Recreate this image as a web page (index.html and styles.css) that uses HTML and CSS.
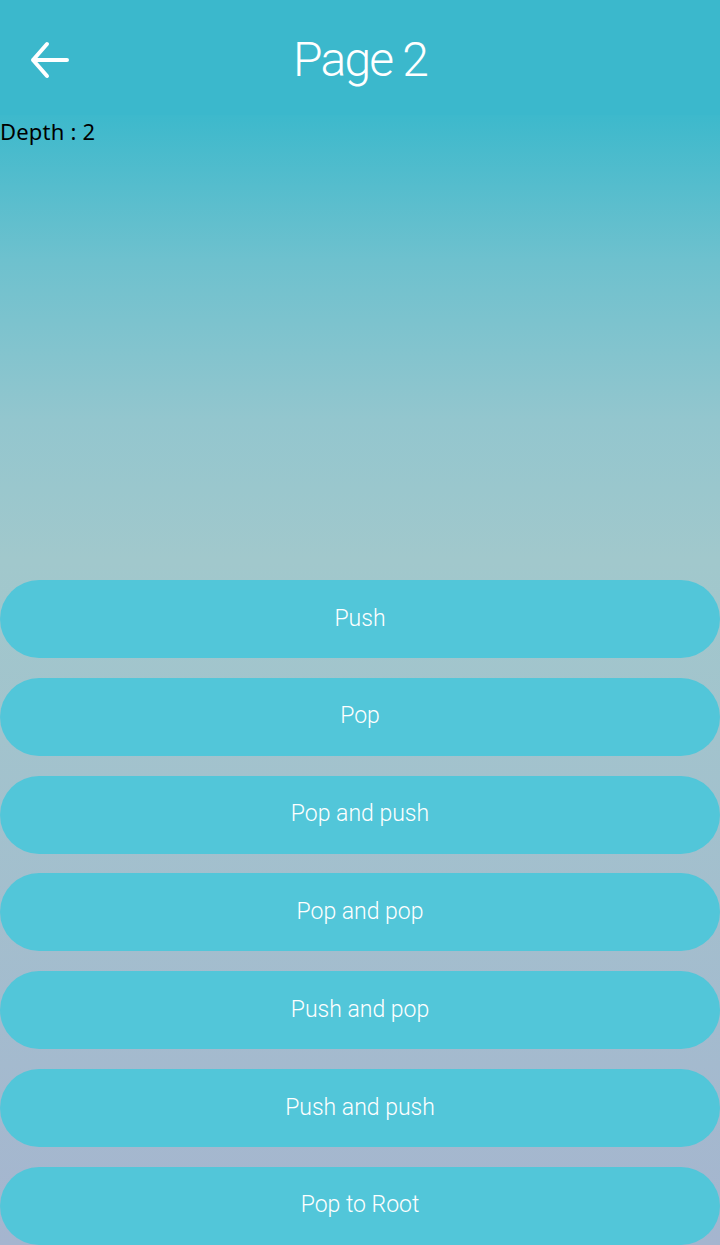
FILE: index.html
```html
<!DOCTYPE html>
<html>
<head>
<meta charset="utf-8">
<link rel="stylesheet" href="styles.css">
</head>
<body>
<div class="page">
  <header class="appbar">
    <button class="back" aria-label="Back">
      <svg width="44" height="40" viewBox="0 0 44 40">
        <path d="M4 20 H38 M18 4 L4 20 L18 36" fill="none" stroke="#fff" stroke-width="4" stroke-linecap="round" stroke-linejoin="round"/>
      </svg>
    </button>
    <h1 class="title">Page 2</h1>
  </header>
  <div class="depth">Depth : 2</div>
  <div class="actions">
    <button class="btn">Push</button>
    <button class="btn">Pop</button>
    <button class="btn">Pop and push</button>
    <button class="btn">Pop and pop</button>
    <button class="btn">Push and pop</button>
    <button class="btn">Push and push</button>
    <button class="btn">Pop to Root</button>
  </div>
</div>
</body>
</html>
```
FILE: styles.css
```css
html, body {
  margin: 0;
  padding: 0;
}
body {
  width: 720px;
  height: 1245px;
  overflow: hidden;
  font-family: Roboto, "Noto Sans", sans-serif;
}
.page {
  height: 1245px;
  display: flex;
  flex-direction: column;
  background: linear-gradient(to bottom, #3cb8cc 0px, #3db9cc 115px, #6ec1ce 260px, #93c6ce 420px, #a1c8cc 560px, #a5b5cf 1245px);
}
.appbar {
  height: 115px;
  flex: none;
  display: flex;
  align-items: center;
  position: relative;
  background: #3bb8cc;
}
.back {
  border: none;
  background: none;
  padding: 0;
  margin-left: 29px;
  margin-top: 5px;
  width: 44px;
  height: 40px;
  display: flex;
}
.title {
  position: absolute;
  left: 0;
  right: 0;
  top: 0;
  margin: 0;
  line-height: 120px;
  text-align: center;
  font-weight: 300;
  font-size: 48px;
  letter-spacing: -1.8px;
  color: #fff;
}
.depth {
  font-family: "Noto Sans", Roboto, sans-serif;
  font-size: 22px;
  line-height: 32px;
  color: #000;
  letter-spacing: 0.2px;
}
.actions {
  margin-top: auto;
  height: 665px;
  display: flex;
  flex-direction: column;
  justify-content: space-between;
}
.btn {
  height: 78px;
  width: 720px;
  flex: none;
  border: none;
  padding: 0;
  border-radius: 39px;
  background: #52c6d9;
  color: #fff;
  font-family: Roboto, "Noto Sans", sans-serif;
  font-weight: 300;
  font-size: 23px;
  padding-bottom: 2px;
}
```
